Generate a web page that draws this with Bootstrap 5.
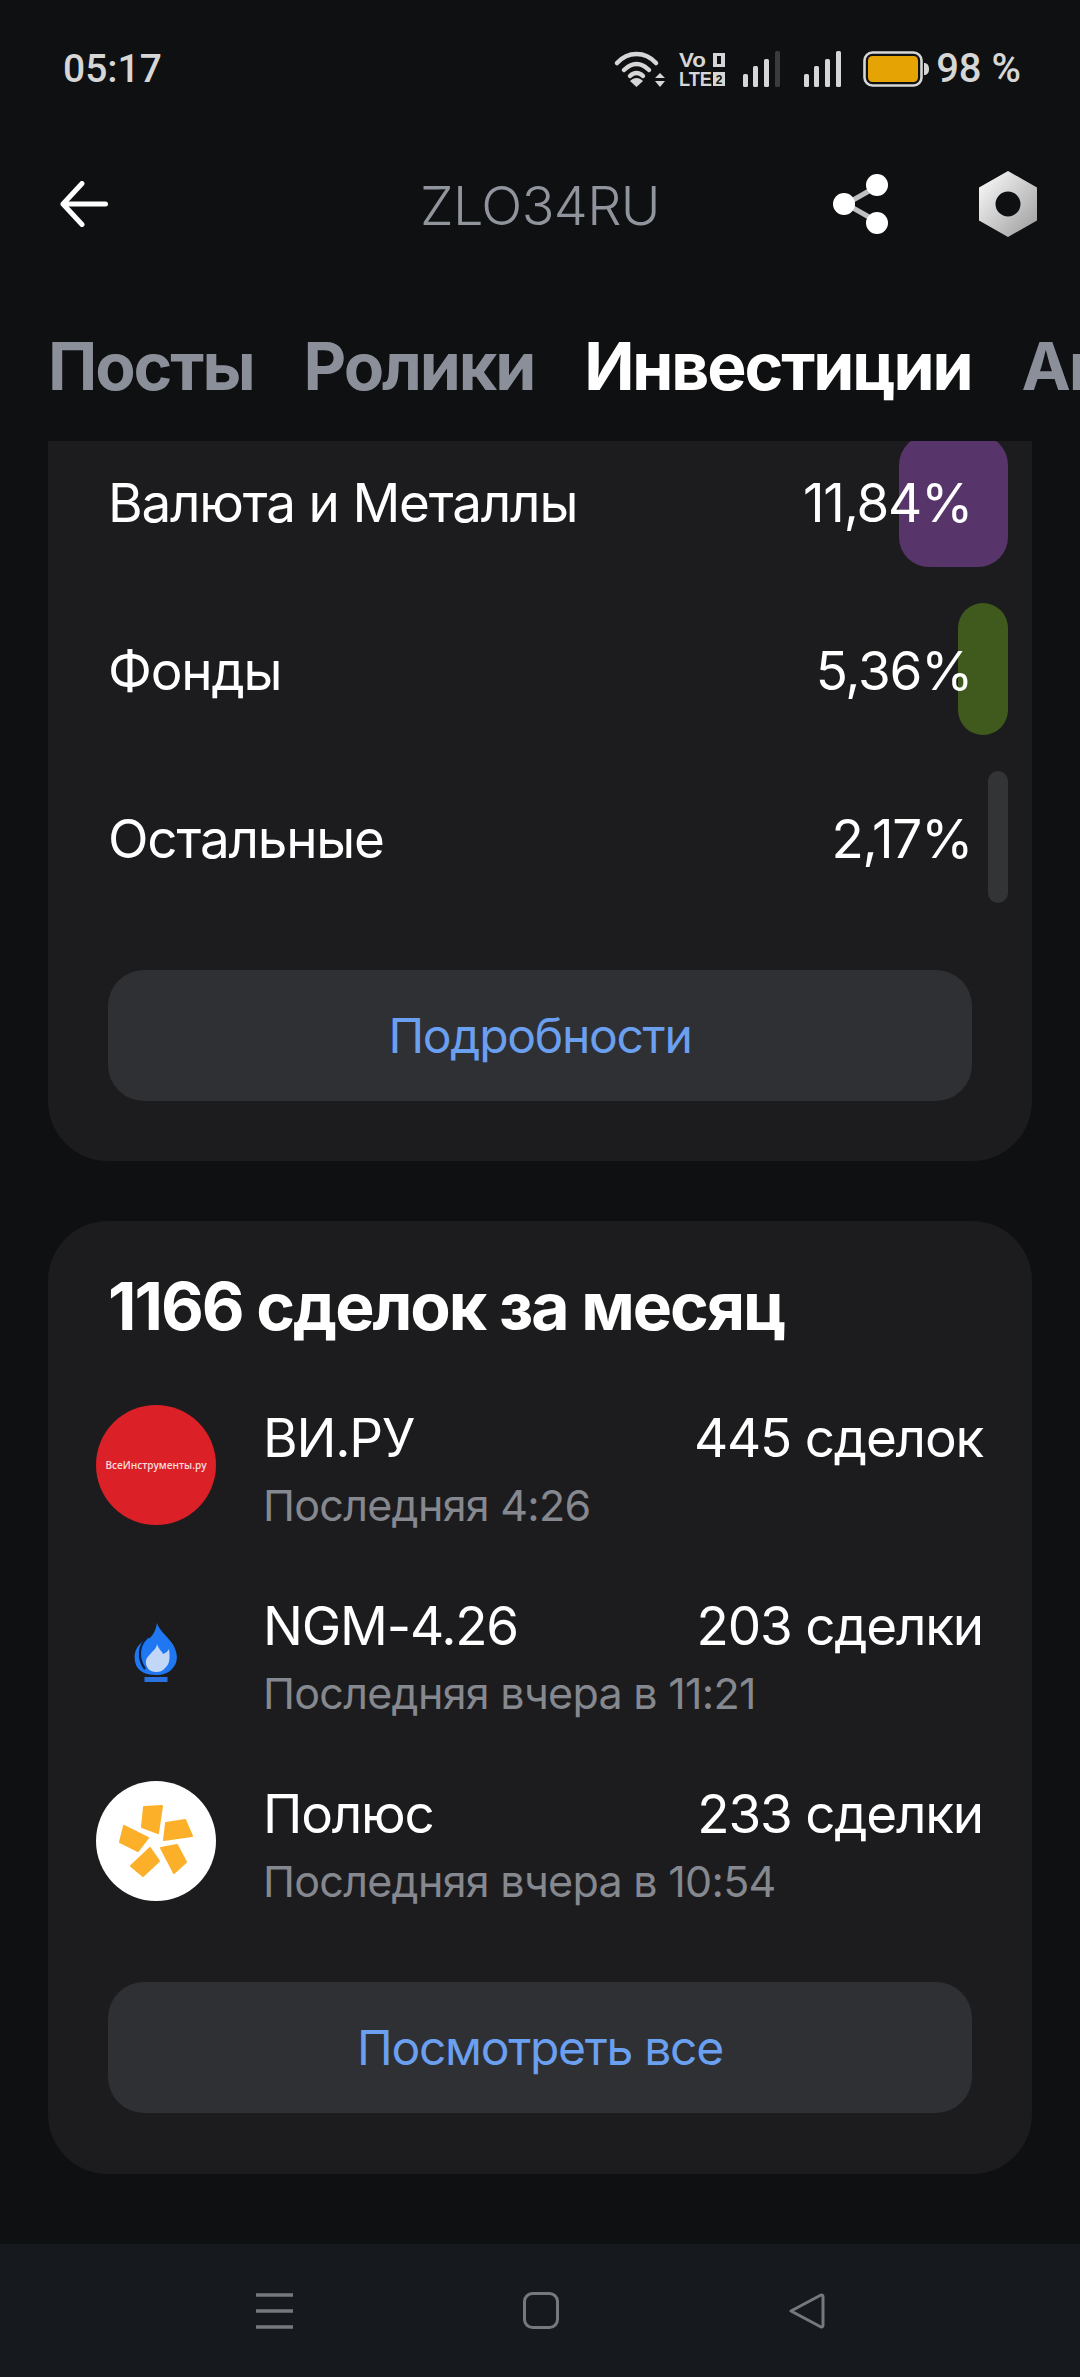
<!DOCTYPE html>
<html lang="ru">
<head>
    <meta charset="UTF-8">
    <meta name="viewport" content="width=device-width, initial-scale=1.0">
    <title>ZLO34RU</title>
    <link href="https://cdn.jsdelivr.net/npm/bootstrap@5.3.0/dist/css/bootstrap.min.css" rel="stylesheet">
    <style>
        html, body { margin: 0; height: 2377px; overflow: hidden; }
        body { background: #0f1011; color: #fff; font-family: Inter, "Noto Sans", sans-serif; }
        .phone { width: 1080px; height: 2377px; }

        .status-row { height: 138px; padding: 0 59px 0 63px; color: #d6d6d6; }
        .status-time { font: 500 39px/1 Roboto, sans-serif; }
        .status-pct { font: 500 40px/1 Roboto, sans-serif; margin-left: 7px; }
        .status-icons svg { display: block; overflow: visible; }
        .volte-icon { margin-left: 14px; }
        .signal-first { margin-left: 17px; }
        .signal-second { margin-left: 22px; }
        .battery-icon { margin-left: 21px; }

        .top-row { height: 132px; position: relative; padding: 0 42px 0 60px; }
        .top-title { position: absolute; left: 0; right: 0; text-align: center; top: 38px; font-size: 54px; line-height: 60px; font-weight: 300; letter-spacing: -.6px; color: #90949c; }
        .top-actions { gap: 88px; }

        .tabs-row { height: 171px; padding: 22px 0 0 48px; gap: 50px; white-space: nowrap; overflow: hidden; font-size: 66px; font-weight: 700; color: #8a8f99; letter-spacing: -2.1px; }
        .tabs-row .is-active { color: #fff; }

        .scroll-area { height: 1803px; overflow: hidden; }
        .info-card { background: #1c1c1e; margin: 0 48px; border-radius: 60px; }
        .card-clipped { margin-top: -6px; padding: 0 24px 60px 60px; border-top-left-radius: 0; border-top-right-radius: 0; height: 726px; }
        .card-deals { margin-top: 60px; height: 953px; padding: 49px 0 0 48px; }

        .share-row { height: 132px; margin-bottom: 36px; padding: 6px 36px 0 0; font-size: 53px; letter-spacing: -1.2px; position: relative; }
        .share-row span { position: relative; }
        .share-bar { position: absolute; right: 0; top: 0; bottom: 0; border-radius: 30px; }
        .bar-purple { background: #57356a; }
        .bar-green { background: #3f5a1c; }
        .bar-gray { background: #333436; border-radius: 10px; }

        .more-btn { display: block; width: 864px; height: 131px; line-height: 127px; padding: 0; border: 0; border-radius: 36px; background: #2f3033; color: #6b9ff0; font-size: 48px; font-weight: 400; letter-spacing: -1.3px; }
        .more-btn:hover { background: #2f3033; color: #6b9ff0; }
        .card-clipped .more-btn { margin-top: 67px; }
        .card-deals .more-btn { margin: 13px 0 0 12px; }

        .deals-title { margin: 0 0 0 12px; font-size: 66px; line-height: 72px; font-weight: 700; letter-spacing: -2px; }
        .deal-list { margin: 63px 0 0 0; }
        .deal-row { height: 188px; padding-right: 49px; }
        .deal-logo { width: 120px; height: 120px; flex: none; border-radius: 50%; margin-right: 47px; }
        .logo-red { background: #dc2027; font: 600 10px/1 "Open Sans", sans-serif; color: #f8dcdc; white-space: nowrap; }
        .logo-white { background: #fff; }
        .deal-body { height: 120px; }
        .deal-main { font-size: 53px; line-height: 60px; font-weight: 400; letter-spacing: -1.2px; padding-top: 3px; }
        .deal-sub { font-size: 43px; line-height: 50px; letter-spacing: -.7px; color: #85888e; margin-top: 12px; }

        .nav-row { height: 133px; background: #16191d; padding: 0 255px 0 256px; }
    </style>
</head>
<body>
<div class="phone d-flex flex-column">

    <div class="status-row d-flex align-items-center justify-content-between">
        <div class="status-time">05:17</div>
        <div class="status-icons d-flex align-items-center">
            <svg width="50" height="38" viewBox="0 0 50 38" fill="none" stroke="#d6d6d6" stroke-width="4.5" stroke-linecap="round">
                <path d="M2 13C13 1 30 1 41 13"/>
                <path d="M9 20C17 12 26 12 34 20"/>
                <path d="M15 26C19 22 24 22 28 26"/>
                <path d="M21.5 37L15 31C19 27 24 27 28 31Z" fill="#d6d6d6" stroke="none"/>
                <path d="M45 23L50 28H40ZM45 37L40 31H50Z" fill="#d6d6d6" stroke="none"/>
            </svg>
            <svg class="volte-icon" width="46" height="38" viewBox="0 0 46 38">
                <text x="0" y="17" font-family="Liberation Sans, sans-serif" font-weight="700" font-size="20" fill="#d6d6d6" textLength="27" lengthAdjust="spacingAndGlyphs">Vo</text>
                <text x="0" y="36" font-family="Liberation Sans, sans-serif" font-weight="700" font-size="20" fill="#d6d6d6" textLength="33" lengthAdjust="spacingAndGlyphs">LTE</text>
                <path d="M34 3h12v14H34zM38 6v8h4V6z" fill="#d6d6d6" fill-rule="evenodd"/>
                <rect x="34" y="22" width="12" height="14" fill="#d6d6d6"/>
                <text x="40" y="34" text-anchor="middle" font-family="Liberation Sans, sans-serif" font-weight="700" font-size="12" fill="#0f1011">2</text>
            </svg>
            <svg class="signal-first" width="39" height="38" viewBox="0 0 39 38">
                <rect x="1" y="24" width="5" height="13" rx="1.5" fill="#d6d6d6"/>
                <rect x="11" y="16" width="5" height="21" rx="1.5" fill="#d6d6d6"/>
                <rect x="22" y="9" width="5" height="28" rx="1.5" fill="#d6d6d6"/>
                <rect x="33" y="1" width="5" height="36" rx="1.5" fill="#3b3b3b"/>
            </svg>
            <svg class="signal-second" width="39" height="38" viewBox="0 0 39 38">
                <rect x="1" y="24" width="5" height="13" rx="1.5" fill="#d6d6d6"/>
                <rect x="11" y="16" width="5" height="21" rx="1.5" fill="#d6d6d6"/>
                <rect x="22" y="9" width="5" height="28" rx="1.5" fill="#d6d6d6"/>
                <rect x="33" y="1" width="5" height="36" rx="1.5" fill="#d6d6d6"/>
            </svg>
            <svg class="battery-icon" width="66" height="36" viewBox="0 0 66 36">
                <rect x="1.500" y="1.500" width="57" height="33" rx="8" fill="none" stroke="#d6d6d6" stroke-width="2.600"/>
                <rect x="5" y="5" width="50" height="26" rx="4.500" fill="#e6a304"/>
                <path d="M61 12c3 0 5 2 5 6s-2 6-5 6z" fill="#d6d6d6"/>
            </svg>
            <div class="status-pct">98 %</div>
        </div>
    </div>

    <div class="top-row d-flex align-items-center justify-content-between">
        <svg width="48" height="46" viewBox="0 0 48 46" fill="none" stroke="#fff" stroke-width="5" stroke-linecap="round" stroke-linejoin="round">
            <path d="M22 2.500L3 23L22 43.500"/>
            <path d="M3.500 23H45.500"/>
        </svg>
        <div class="top-title">ZLO34RU</div>
        <div class="top-actions d-flex align-items-center">
            <svg width="58" height="62" viewBox="0 0 58 62">
                <path d="M44 14L14 31L44 48" fill="none" stroke="#bfc0c2" stroke-width="5"/>
                <circle cx="45" cy="12" r="11" fill="#fff"/>
                <circle cx="12" cy="31" r="11" fill="#fff"/>
                <circle cx="45" cy="50" r="11" fill="#fff"/>
            </svg>
            <svg width="60" height="68" viewBox="0 0 60 68">
                <defs>
                    <linearGradient id="nutFill" x1="0" y1="0" x2="1" y2="1">
                        <stop offset="0" stop-color="#fff"/>
                        <stop offset="1" stop-color="#9a9a9a"/>
                    </linearGradient>
                </defs>
                <path fill-rule="evenodd" fill="url(#nutFill)" d="M30 1L59 17.500V50.500L30 67L1 50.500V17.500ZM30 21.500a12.500 12.500 0 1 0 0 25a12.500 12.500 0 1 0 0-25Z"/>
            </svg>
        </div>
    </div>

    <div class="tabs-row d-flex align-items-center">
        <span>Посты</span>
        <span>Ролики</span>
        <span class="is-active">Инвестиции</span>
        <span>Аналитика</span>
    </div>

    <div class="scroll-area">
        <div class="info-card card-clipped">
            <div class="share-row d-flex align-items-center justify-content-between">
                <div class="share-bar bar-purple" style="width:109px"></div>
                <span>Валюта и Металлы</span><span>11,84%</span>
            </div>
            <div class="share-row d-flex align-items-center justify-content-between">
                <div class="share-bar bar-green" style="width:50px"></div>
                <span>Фонды</span><span>5,36%</span>
            </div>
            <div class="share-row d-flex align-items-center justify-content-between">
                <div class="share-bar bar-gray" style="width:20px"></div>
                <span>Остальные</span><span>2,17%</span>
            </div>
            <button class="btn more-btn" type="button">Подробности</button>
        </div>

        <div class="info-card card-deals">
            <h2 class="deals-title">1166 сделок за месяц</h2>
            <div class="deal-list">
                <div class="deal-row d-flex">
                    <div class="deal-logo logo-red d-flex align-items-center justify-content-center">ВсеИнструменты.ру</div>
                    <div class="deal-body flex-grow-1">
                        <div class="deal-main d-flex justify-content-between"><span>ВИ.РУ</span><span>445 сделок</span></div>
                        <div class="deal-sub">Последняя 4:26</div>
                    </div>
                </div>
                <div class="deal-row d-flex">
                    <div class="deal-logo d-flex align-items-center justify-content-center">
                        <svg width="44" height="60" viewBox="0 0 44 60">
                            <rect x="10.500" y="54" width="23" height="5" fill="#2a72e0"/>
                            <path d="M23 0C25 7 32 12 38 20C44 29 45 39 38 46C34 50 29 52 22 52C13 52 5 49 2 42C-1 34 1 25 7 20C10 17 13 15 16 15C20 11 22 6 23 0Z" fill="#1f78f2"/>
                            <path d="M13 15C5 22 3 35 11 46" fill="none" stroke="#0e2140" stroke-width="2.200"/>
                            <path d="M23 21C25 27 28 28 29 31C32 30 34 28 35 26C36 34 36 40 32 44C29 48 26 49 22 49C17 49 13 46 12 41C11 35 15 33 18 29C21 26 23 24 23 21Z" fill="#c2d7f5"/>
                        </svg>
                    </div>
                    <div class="deal-body flex-grow-1">
                        <div class="deal-main d-flex justify-content-between"><span>NGM-4.26</span><span>203 сделки</span></div>
                        <div class="deal-sub">Последняя вчера в 11:21</div>
                    </div>
                </div>
                <div class="deal-row d-flex">
                    <div class="deal-logo logo-white d-flex align-items-center justify-content-center">
                        <svg width="120" height="120" viewBox="0 0 120 120" fill="#fcb02a" stroke="#fcb02a" stroke-width="2" stroke-linejoin="round">
                            <path d="M48 26L66 25L62 52L46 46Z"/>
                            <path d="M70 42L89 39L96 55L68 59Z"/>
                            <path d="M65 67L81 64L90 81L78 92Z"/>
                            <path d="M54 67L63 80L47 95L35 85Z"/>
                            <path d="M28 45L52 57L42 70L24 61Z"/>
                        </svg>
                    </div>
                    <div class="deal-body flex-grow-1">
                        <div class="deal-main d-flex justify-content-between"><span>Полюс</span><span>233 сделки</span></div>
                        <div class="deal-sub">Последняя вчера в 10:54</div>
                    </div>
                </div>
            </div>
            <button class="btn more-btn" type="button">Посмотреть все</button>
        </div>
    </div>

    <div class="nav-row d-flex align-items-center justify-content-between">
        <svg width="37" height="36" viewBox="0 0 37 36" stroke="#77787c" stroke-width="3.400">
            <path d="M0 2H37M0 18H37M0 34H37"/>
        </svg>
        <svg width="36" height="37" viewBox="0 0 36 37" fill="none" stroke="#77787c" stroke-width="3">
            <rect x="1.500" y="1.500" width="33" height="34" rx="8"/>
        </svg>
        <svg width="36" height="36" viewBox="0 0 36 36" fill="none" stroke="#77787c" stroke-width="3" stroke-linejoin="round">
            <path d="M2 18L32 2Q34 1.500 34 4V32Q34 34.500 32 34Z"/>
        </svg>
    </div>
</div>
<script src="https://cdn.jsdelivr.net/npm/bootstrap@5.3.0/dist/js/bootstrap.bundle.min.js"></script>
</body>
</html>
